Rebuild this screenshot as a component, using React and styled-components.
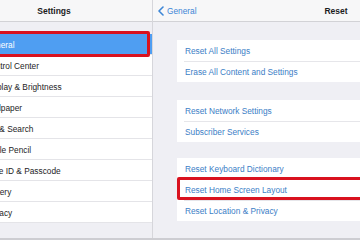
import React from 'react';
import styled, { createGlobalStyle } from 'styled-components';

const GlobalStyle = createGlobalStyle`
    body{
        margin: 0;
        font-family: "Liberation Sans", Arial, sans-serif;
        background: #efeff4;
    }
`

const sidebarItems = [
    'General',
    'Control Center',
    'Display & Brightness',
    'Wallpaper',
    'Siri & Search',
    'Apple Pencil',
    'Face ID & Passcode',
    'Battery',
    'Privacy',
];

const resetGroups = [
    { gap: 18, items: ['Reset All Settings', 'Erase All Content and Settings'] },
    { gap: 16, items: ['Reset Network Settings', 'Subscriber Services'] },
    { gap: 0, items: ['Reset Keyboard Dictionary', 'Reset Home Screen Layout', 'Reset Location & Privacy'] },
];

const BackChevron = () => (
    <svg width='6' height='10' viewBox='0 0 6 10'>
        <polyline points='5,1 1,5 5,9' fill='none' stroke='#3d86d6' strokeWidth='1.6' strokeLinecap='round' strokeLinejoin='round'/>
    </svg>
);

const App = () =>{
    return(
        <>
            <GlobalStyle/>
            <Screen>
                <Sidebar>
                    <Header>
                        <Title>Settings</Title>
                    </Header>
                    <SideList>
                        {sidebarItems.map((item) => (
                            <SideRow key={item} selected={item === 'General'}>
                                {item}
                                {item === 'General' && <Marker side='left'/>}
                            </SideRow>
                        ))}
                    </SideList>
                </Sidebar>
                <Detail>
                    <Header>
                        <Back>
                            <BackChevron/>
                            General
                        </Back>
                        <Title>Reset</Title>
                    </Header>
                    <Groups>
                        {resetGroups.map((group, i) => (
                            <Group key={i} gap={group.gap}>
                                {group.items.map((item) => (
                                    <ActionRow key={item}>
                                        {item}
                                        {item === 'Reset Home Screen Layout' && <Marker side='right'/>}
                                    </ActionRow>
                                ))}
                            </Group>
                        ))}
                    </Groups>
                </Detail>
            </Screen>
        </>
    )
}

export default App

const Screen = styled.div`
    display: flex;
    width: 360px;
    height: 240px;
    overflow: hidden;
    background: #efeff4;
    box-sizing: border-box;
    border-bottom: 2px solid #cdcdd2;
`

const Sidebar = styled.div`
    flex: 0 0 196px;
    margin-left: -44px;
    border-right: 1px solid #d6d6db;
    display: flex;
    flex-direction: column;
`

const Header = styled.div`
    position: relative;
    height: 21px;
    flex: 0 0 21px;
    background: #f7f7f8;
    border-top: 1px solid #dcdce0;
    border-bottom: 1px solid #d2d2d6;
    box-sizing: content-box;
    margin-top: -1px;
    display: flex;
    align-items: center;
    justify-content: center;
`

const Title = styled.div`
    font-size: 8.5px;
    font-weight: 700;
    color: #1c1c1e;
`

const SideList = styled.div`
    margin-top: 12px;
    background: #ffffff;
`

const SideRow = styled.div`
    position: relative;
    height: 21px;
    display: flex;
    align-items: center;
    padding-left: 29px;
    font-size: 8.3px;
    color: ${p => p.selected ? '#ffffff' : '#1c1c1e'};
    background: ${p => p.selected ? '#4f9ef2' : 'transparent'};
    box-shadow: inset 0 -1px 0 #e4e4e8;
`

const Marker = styled.span`
    position: absolute;
    top: ${p => p.side === 'left' ? '-3px' : '-2px'};
    bottom: ${p => p.side === 'left' ? '-2px' : '0'};
    left: 0;
    right: ${p => p.side === 'left' ? '2px' : '-20px'};
    border: 3px solid #d9121f;
    border-radius: 2px;
`

const Detail = styled.div`
    flex: 0 0 366px;
    display: flex;
    flex-direction: column;
`

const Back = styled.div`
    position: absolute;
    left: 5px;
    top: 0;
    bottom: 0;
    display: flex;
    align-items: center;
    gap: 3px;
    font-size: 8.3px;
    color: #3d86d6;
`

const Groups = styled.div`
    padding: 18px 24px 0 24px;
`

const Group = styled.div`
    background: #ffffff;
    margin-bottom: ${p => p.gap}px;
`

const ActionRow = styled.div`
    position: relative;
    height: 21px;
    display: flex;
    align-items: center;
    padding-left: 8px;
    font-size: 8.3px;
    color: #3b7ec6;

    & + &::before{
        content: '';
        position: absolute;
        top: 0;
        left: 7px;
        right: 0;
        height: 1px;
        background: #e6e6ea;
    }
`
